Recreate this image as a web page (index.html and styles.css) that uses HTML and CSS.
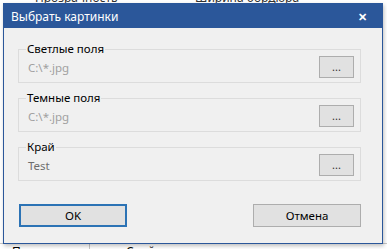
FILE: index.html
```html
<!DOCTYPE html>
<html lang="ru">
<head>
  <meta charset="UTF-8">
  <title>Выбрать картинки</title>
  <link rel="stylesheet" href="styles.css">
</head>
<body>
  <div class="backdrop">
    <div class="back-head">
      <span class="back-col first">Прозрачность</span>
      <span class="back-col second">Ширина бордюра</span>
    </div>
    <div class="back-foot">
      <span class="foot-cell a">Поле</span>
      <span class="foot-cell b">Слой</span>
    </div>
  </div>

  <div class="dialog">
    <div class="titlebar">
      <span class="title">Выбрать картинки</span>
      <span class="close">✕</span>
    </div>

    <div class="content">
      <div class="group">
        <div class="group-title">Светлые поля</div>
        <div class="group-row">
          <span class="path">C:\*.jpg</span>
          <button class="browse">...</button>
        </div>
      </div>

      <div class="group">
        <div class="group-title">Темные поля</div>
        <div class="group-row">
          <span class="path">C:\*.jpg</span>
          <button class="browse">...</button>
        </div>
      </div>

      <div class="group">
        <div class="group-title">Край</div>
        <div class="group-row">
          <span class="path dark">Test</span>
          <button class="browse">...</button>
        </div>
      </div>

      <div class="actions">
        <button class="btn default">OK</button>
        <button class="btn">Отмена</button>
      </div>
    </div>
  </div>
</body>
</html>
```

FILE: styles.css
```css
body {
  margin: 0;
  width: 387px;
  height: 249px;
  overflow: hidden;
  background: #ffffff;
  font-family: 'Noto Sans', 'Open Sans', sans-serif;
  font-size: 11.5px;
  color: #000;
  position: relative;
}
.backdrop {
  height: 100%;
  display: flex;
  flex-direction: column;
  justify-content: space-between;
}
.back-head {
  display: flex;
  margin-top: -11px;
  height: 12px;
  font-size: 12px;
  color: #333;
}
.back-col.first {
  margin-left: 35px;
  width: 160px;
}
.back-foot {
  display: flex;
  height: 5px;
  border-top: 1px solid #c8c8c8;
  font-size: 12px;
  line-height: 16px;
  overflow: hidden;
}
.foot-cell {
  padding-left: 12px;
}
.foot-cell.a {
  width: 77px;
  border-right: 1px solid #c8c8c8;
}
.foot-cell.b {
  padding-left: 36px;
}

.dialog {
  position: absolute;
  left: 3px;
  top: 3px;
  width: 378px;
  height: 239px;
  border: 1px solid #2b579a;
  background: #f0f0f0;
  box-shadow: 1px 2px 4px rgba(0,0,0,0.25);
  display: flex;
  flex-direction: column;
}
.titlebar {
  height: 24px;
  background: #2b579a;
  color: #fff;
  display: flex;
  align-items: center;
  justify-content: space-between;
  padding: 0 15px 0 7px;
  font-size: 12px;
}
.close {
  font-size: 11px;
  font-weight: bold;
}
.content {
  padding: 21px 21px 0 14px;
}
.group {
  border: 1px solid #dcdcdc;
  padding: 0 6px 4px 9px;
  margin-bottom: 15px;
}
.group-title {
  width: fit-content;
  background: #f0f0f0;
  line-height: 16px;
  margin: -9px 0 0 -2px;
  padding: 0 1px;
}
.group-row {
  display: flex;
  align-items: center;
  justify-content: space-between;
  margin-top: -1px;
}
.path {
  color: #a0a0a0;
}
.path.dark {
  color: #6d6d6d;
}
.browse {
  width: 35px;
  height: 22px;
  padding: 0;
  border: 1px solid #adadad;
  background: #e1e1e1;
  font-family: inherit;
  font-size: 11px;
  color: #333;
  line-height: 14px;
}
.actions {
  display: flex;
  justify-content: space-between;
  margin: 23px 0 0 1px;
}
.btn {
  width: 108px;
  height: 23px;
  padding: 0;
  border: 1px solid #adadad;
  background: #e1e1e1;
  font-family: inherit;
  font-size: 11.5px;
  color: #000;
}
.btn.default {
  border: 2px solid #2c73b5;
}
```
